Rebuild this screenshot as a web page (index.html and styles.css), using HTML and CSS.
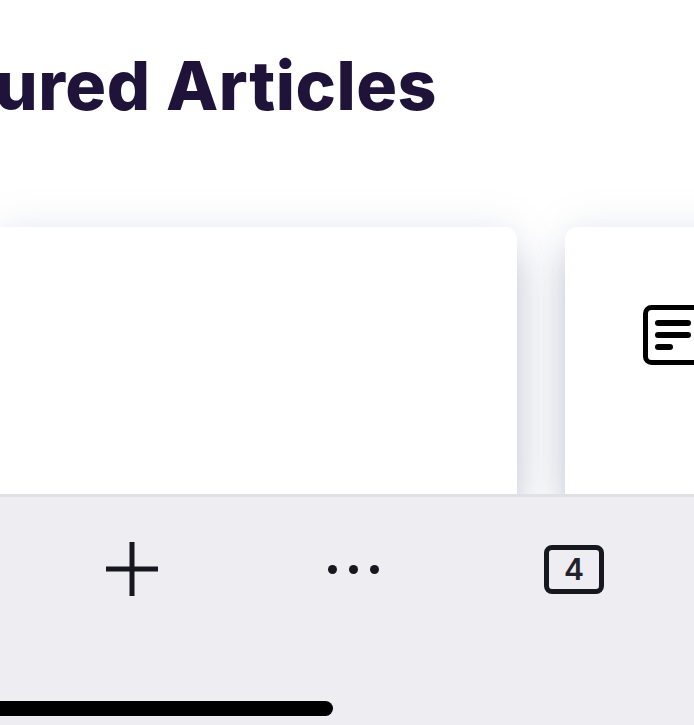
FILE: index.html
```html
<!DOCTYPE html>
<html lang="en">
<head>
  <meta charset="UTF-8">
  <title>Featured Articles</title>
  <link rel="stylesheet" href="styles.css">
</head>
<body>
  <div class="page-wrap">
    <header class="page-header">
      <h1>Featured Articles</h1>
    </header>

    <main class="card-row">
      <article class="card card-first"></article>
      <article class="card card-second">
        <svg class="doc-icon" width="60" height="60" viewBox="0 0 60 60" fill="none">
          <rect x="2.5" y="2.5" width="68" height="55" rx="6" stroke="#000" stroke-width="5"/>
          <path d="M15 18H45M15 30H45M15 42H27" stroke="#000" stroke-width="6" stroke-linecap="round"/>
        </svg>
      </article>
    </main>

    <footer class="toolbar">
      <div class="toolbar-items">
        <div class="tool">
          <svg width="54" height="54" viewBox="0 0 54 54">
            <path d="M27 0V54M1 27H53" stroke="#17171f" stroke-width="5"/>
          </svg>
        </div>
        <div class="tool dots">
          <span></span><span></span><span></span>
        </div>
        <div class="tool">
          <div class="tab-count">4</div>
        </div>
      </div>
      <div class="home-bar"></div>
    </footer>
  </div>
</body>
</html>
```
FILE: styles.css
```css
* {
  margin: 0;
  padding: 0;
  box-sizing: border-box;
}

body {
  font-family: 'Inter', 'Liberation Sans', sans-serif;
  background: #fff;
  overflow: hidden;
}

.page-wrap {
  height: 725px;
  display: flex;
  flex-direction: column;
  overflow: hidden;
}

.page-header {
  height: 227px;
  flex-shrink: 0;
  display: flex;
  justify-content: flex-end;
  width: 437px;
  padding-top: 44px;
}

.page-header h1 {
  font-size: 68px;
  line-height: 82px;
  font-weight: 800;
  letter-spacing: 0.5px;
  color: #20133a;
  white-space: nowrap;
  flex-shrink: 0;
}

/* Cards */
.card-row {
  flex: 1;
  display: flex;
  gap: 48px;
  min-height: 0;
}

.card {
  flex-shrink: 0;
  background: #fff;
  border-radius: 12px 12px 0 0;
  box-shadow: 0 30px 36px rgba(100, 110, 140, 0.32), 0 0 40px rgba(120, 130, 160, 0.16);
}

.card-first {
  width: 517px;
  border-top-left-radius: 0;
}

.card-second {
  width: 400px;
  padding: 78px 0 0 78px;
}

.doc-icon {
  display: block;
  overflow: visible;
}

/* Bottom toolbar */
.toolbar {
  height: 231px;
  flex-shrink: 0;
  position: relative;
  background: #eeedf2;
  border-top: 3px solid #e1e0e6;
  display: flex;
  flex-direction: column;
}

.toolbar-items {
  display: grid;
  grid-template-columns: repeat(3, 221px);
  padding: 45px 0 0 21.5px;
  height: 204px;
}

.tool {
  height: 54px;
  display: flex;
  align-items: center;
  justify-content: center;
}

.dots {
  gap: 12px;
}

.dots span {
  width: 9px;
  height: 9px;
  border-radius: 50%;
  background: #17171f;
}

.tab-count {
  width: 60px;
  height: 49px;
  border: 5px solid #17171f;
  border-radius: 8px;
  display: flex;
  align-items: center;
  justify-content: center;
  font-size: 30px;
  font-weight: 600;
  color: #22222a;
}

.home-bar {
  width: 333px;
  height: 15px;
  background: #000;
  border-radius: 0 8px 8px 0;
}
```
